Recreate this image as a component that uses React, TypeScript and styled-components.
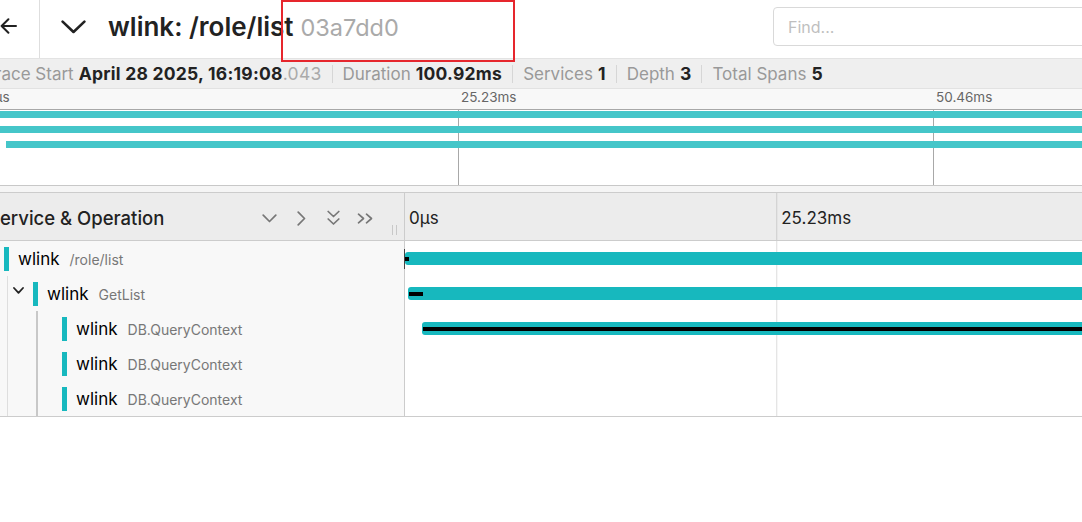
import React from 'react';
import styled, { createGlobalStyle } from 'styled-components';

const GlobalStyle = createGlobalStyle`
  *, *::before, *::after { box-sizing: border-box; }
  html, body { margin: 0; padding: 0; background: #fff; overflow: hidden; }
  body {
    font-family: Inter, "Noto Sans", "Liberation Sans", sans-serif;
    color: #222;
    -webkit-font-smoothing: antialiased;
  }
`;

const TEAL = '#17b8be';
const MINI_TEAL = '#45c6c9';
const TOTAL_MS = 100.92;
const pct = (ms: number) => `${(ms / TOTAL_MS) * 100}%`;

type Span = {
  service: string;
  op: string;
  start: number;
  dur: number;
  guides: boolean[];
  hasChildren?: boolean;
  critical?: [number, number];
};

const spans: Span[] = [
  { service: 'wlink', op: '/role/list', start: 0, dur: 100.92, guides: [], hasChildren: true, critical: [0, 0.27] },
  { service: 'wlink', op: 'GetList', start: 0.22, dur: 100.4, guides: [false], hasChildren: true, critical: [0.27, 1.22] },
  { service: 'wlink', op: 'DB.QueryContext', start: 1.17, dur: 67.9, guides: [false, true], critical: [1.22, 69.07] },
  { service: 'wlink', op: 'DB.QueryContext', start: 69.9, dur: 14.6, guides: [false, true] },
  { service: 'wlink', op: 'DB.QueryContext', start: 85.1, dur: 15.2, guides: [false, true] },
];

const ticks = ['0µs', '25.23ms', '50.46ms', '75.69ms'];

/* ---------- page ---------- */

const Page = styled.div`
  width: 1910px;
  margin-left: -16px;
`;

/* ---------- header ---------- */

const Header = styled.header`
  position: relative;
  display: flex;
  height: 59px;
  border-bottom: 1px solid #e3e3e3;
  background: #fff;
`;

const BackLink = styled.a`
  flex: 0 0 56px;
  display: flex;
  align-items: center;
  padding: 0 0 7px 16px;
  border-right: 1px solid #dedede;
  color: #222;
`;

const TitleArea = styled.div`
  flex: 1 1 auto;
  min-width: 0;
  display: flex;
  align-items: center;
  padding-bottom: 5px;
`;

const CollapseToggle = styled.button`
  display: flex;
  align-items: center;
  justify-content: center;
  width: 26px;
  height: 26px;
  margin-left: 20px;
  padding: 0;
  border: 0;
  background: none;
  color: #222;
`;

const Title = styled.h1`
  margin: 0 0 0 22px;
  font-size: 26px;
  font-weight: 600;
  color: #222;
  white-space: nowrap;
`;

const TraceId = styled.small`
  margin-left: 7px;
  font-size: 23.5px;
  font-weight: 400;
  color: #aaa;
`;

const Controls = styled.div`
  flex: 0 0 1121px;
  display: flex;
  align-items: center;
  padding-bottom: 5px;
`;

const SearchInput = styled.input`
  width: 330px;
  height: 39px;
  padding: 0 14px;
  border: 1px solid #d9d9d9;
  border-radius: 4px;
  font-family: inherit;
  font-size: 16px;
  color: #222;
  background: #fff;
  &::placeholder { color: #bfbfbf; }
`;

const Highlight = styled.div`
  position: absolute;
  left: 297px;
  top: 0;
  width: 234px;
  height: 62px;
  border: 2px solid #e6262d;
  pointer-events: none;
  z-index: 5;
`;

/* ---------- overview ---------- */

const Overview = styled.div`
  display: flex;
  align-items: center;
  height: 30px;
  padding-left: 1px;
  background: #efefef;
  border-bottom: 1px solid #e2e2e2;
  font-size: 17px;
  white-space: nowrap;
`;

const OverviewItem = styled.span`
  color: #999;
`;

const OverviewValue = styled.strong`
  margin-left: 5px;
  font-size: 17.5px;
  font-weight: 700;
  letter-spacing: 0.25px;
  color: #222;
`;

const Muted = styled.span`
  color: #aaa;
  font-weight: 400;
`;

const Divider = styled.span`
  width: 1px;
  height: 18px;
  margin: 0 10px;
  background: #d6d6d6;
`;

/* ---------- minimap ---------- */

const MinimapWrap = styled.div`
  padding-bottom: 6px;
  background: #f5f5f5;
`;

const Minimap = styled.div`
  width: 1900px;
  background: #fff;
`;

const MiniTicks = styled.div`
  display: grid;
  grid-template-columns: repeat(4, 1fr);
  height: 21px;
  background: #f8f8f8;
  border-bottom: 1px solid #a8a8a8;
`;

const MiniTick = styled.span`
  padding-left: 2px;
  font-size: 13.5px;
  line-height: 17px;
  color: #666;
`;

const MiniCanvas = styled.div`
  height: 76px;
  border-bottom: 1px solid #c8c8c8;
  background-image: linear-gradient(to left, #a8a8a8 1px, transparent 1px);
  background-size: 25% 100%;
`;

const MiniRow = styled.div`
  height: 15px;
  padding-top: 1px;
`;

const MiniBar = styled.div`
  height: 7px;
  background: ${MINI_TEAL};
`;

/* ---------- timeline view ---------- */

const TimelineView = styled.section`
  border-top: 1px solid #ccc;
  border-bottom: 1px solid #ccc;
`;

const HeaderRow = styled.div`
  display: grid;
  grid-template-columns: 421px 1fr;
  height: 48px;
  background: #ececec;
  border-bottom: 1px solid #ccc;
`;

const NameHeader = styled.div`
  display: flex;
  align-items: center;
  padding: 3px 7px 0 4px;
  border-right: 1px solid #ccc;
`;

const ColumnTitle = styled.h3`
  flex: 1 1 auto;
  margin: 0;
  font-size: 18.5px;
  font-weight: 500;
  color: #222;
  white-space: nowrap;
`;

const IconButton = styled.button`
  flex: 0 0 32px;
  display: flex;
  align-items: center;
  justify-content: center;
  height: 24px;
  padding: 0;
  border: 0;
  background: none;
  color: #777;
`;

const ResizeHandle = styled.span`
  align-self: flex-end;
  flex: 0 0 5px;
  height: 10px;
  margin: 0 0 5px 11px;
  border-left: 1px solid #c8c8c8;
  border-right: 1px solid #c8c8c8;
`;

const TickHeader = styled.div`
  display: grid;
  grid-template-columns: repeat(4, 1fr);
  background-image: linear-gradient(to left, #ccc 1px, transparent 1px);
  background-size: 25% 100%;
`;

const TickHeadLabel = styled.span`
  display: flex;
  align-items: center;
  padding: 3px 0 0 4px;
  font-size: 17px;
  color: #222;
`;

const Row = styled.div`
  display: grid;
  grid-template-columns: 421px 1fr;
  height: 35px;
`;

const NameCell = styled.div`
  display: flex;
  align-items: center;
  background: #f8f8f8;
  border-right: 1px solid #ccc;
  white-space: nowrap;
`;

const Guide = styled.span<{ $strong?: boolean }>`
  flex: 0 0 29px;
  align-self: stretch;
  display: flex;
  &::before {
    content: '';
    margin-left: 23px;
    width: ${(p) => (p.$strong ? 2 : 1)}px;
    background: ${(p) => (p.$strong ? '#c8c8c8' : '#dedede')};
  }
`;

const ToggleSlot = styled.span`
  flex: 0 0 20px;
  display: flex;
  align-items: center;
  padding-bottom: 7px;
  color: #222;
`;

const Indicator = styled.span`
  flex: 0 0 5px;
  height: 24px;
  margin-right: 9px;
  background: ${TEAL};
`;

const ServiceName = styled.span`
  font-size: 17px;
  color: #000;
`;

const OperationName = styled.span`
  margin-left: 10px;
  font-size: 14px;
  color: #777;
`;

const TimelineCell = styled.div`
  display: flex;
  align-items: center;
  background-image: linear-gradient(to left, #dcdcdc 1px, transparent 1px);
  background-size: 25% 100%;
`;

const Track = styled.div`
  position: relative;
  flex: 1 1 auto;
  height: 13px;
`;

const Bar = styled.div`
  position: absolute;
  top: 0;
  bottom: 0;
  border-radius: 3px;
  background: ${TEAL};
`;

const CriticalPath = styled.div`
  position: absolute;
  top: 4.5px;
  height: 4px;
  background: #000;
`;

const StartMark = styled.span`
  position: absolute;
  left: -1px;
  top: -3.5px;
  width: 1px;
  height: 20px;
  background: #444;
`;

/* ---------- icons ---------- */

const ArrowLeftIcon = () => (
  <svg width="17" height="16" viewBox="0 0 17 16" fill="none" stroke="currentColor" strokeWidth="2" strokeLinecap="round" strokeLinejoin="round">
    <path d="M16 8H1.6M8.4 1.3L1.6 8L8.4 14.7" />
  </svg>
);

const BigChevronDown = () => (
  <svg width="25" height="14" viewBox="0 0 25 14" fill="none" stroke="currentColor" strokeWidth="2.6" strokeLinecap="round" strokeLinejoin="round">
    <polyline points="1.6,1.6 12.5,12 23.4,1.6" />
  </svg>
);

const ChevronDownIcon = () => (
  <svg width="15" height="9" viewBox="0 0 15 9" fill="none" stroke="currentColor" strokeWidth="1.7" strokeLinecap="round" strokeLinejoin="round">
    <polyline points="1.2,1.2 7.5,7.5 13.8,1.2" />
  </svg>
);

const ChevronRightIcon = () => (
  <svg width="9" height="15" viewBox="0 0 9 15" fill="none" stroke="currentColor" strokeWidth="1.7" strokeLinecap="round" strokeLinejoin="round">
    <polyline points="1.2,1.2 7.5,7.5 1.2,13.8" />
  </svg>
);

const DoubleDownIcon = () => (
  <svg width="13" height="16" viewBox="0 0 13 16" fill="none" stroke="currentColor" strokeWidth="1.7" strokeLinecap="round" strokeLinejoin="round">
    <polyline points="1.2,1.5 6.5,6.5 11.8,1.5" />
    <polyline points="1.2,9 6.5,14 11.8,9" />
  </svg>
);

const DoubleRightIcon = () => (
  <svg width="17" height="11" viewBox="0 0 17 11" fill="none" stroke="currentColor" strokeWidth="1.7" strokeLinecap="round" strokeLinejoin="round">
    <polyline points="1.5,1.2 6.5,5.5 1.5,9.8" />
    <polyline points="9.5,1.2 14.5,5.5 9.5,9.8" />
  </svg>
);

const SmallChevron = () => (
  <svg width="11" height="7" viewBox="0 0 11 7" fill="none" stroke="currentColor" strokeWidth="1.8" strokeLinecap="round" strokeLinejoin="round">
    <polyline points="1,1 5.5,5.8 10,1" />
  </svg>
);

/* ---------- app ---------- */

export default function App() {
  return (
    <>
      <GlobalStyle />
      <Page>
        <Header>
          <BackLink href="#" aria-label="Back">
            <ArrowLeftIcon />
          </BackLink>
          <TitleArea>
            <CollapseToggle aria-label="Collapse details">
              <BigChevronDown />
            </CollapseToggle>
            <Title>
              wlink: /role/list<TraceId>03a7dd0</TraceId>
            </Title>
          </TitleArea>
          <Controls>
            <SearchInput placeholder="Find..." />
          </Controls>
          <Highlight />
        </Header>

        <Overview>
          <OverviewItem>
            Trace Start
            <OverviewValue>
              April 28 2025, 16:19:08<Muted>.043</Muted>
            </OverviewValue>
          </OverviewItem>
          <Divider />
          <OverviewItem>
            Duration<OverviewValue>100.92ms</OverviewValue>
          </OverviewItem>
          <Divider />
          <OverviewItem>
            Services<OverviewValue>1</OverviewValue>
          </OverviewItem>
          <Divider />
          <OverviewItem>
            Depth<OverviewValue>3</OverviewValue>
          </OverviewItem>
          <Divider />
          <OverviewItem>
            Total Spans<OverviewValue>5</OverviewValue>
          </OverviewItem>
        </Overview>

        <MinimapWrap>
          <Minimap>
            <MiniTicks>
              {ticks.map((t) => (
                <MiniTick key={t}>{t}</MiniTick>
              ))}
            </MiniTicks>
            <MiniCanvas>
              {spans.map((s, i) => (
                <MiniRow key={i}>
                  <MiniBar style={{ marginLeft: pct(s.start), width: pct(s.dur) }} />
                </MiniRow>
              ))}
            </MiniCanvas>
          </Minimap>
        </MinimapWrap>

        <TimelineView>
          <HeaderRow>
            <NameHeader>
              <ColumnTitle>Service &amp; Operation</ColumnTitle>
              <IconButton aria-label="Expand +1"><ChevronDownIcon /></IconButton>
              <IconButton aria-label="Collapse +1"><ChevronRightIcon /></IconButton>
              <IconButton aria-label="Expand all"><DoubleDownIcon /></IconButton>
              <IconButton aria-label="Collapse all"><DoubleRightIcon /></IconButton>
              <ResizeHandle />
            </NameHeader>
            <TickHeader>
              {ticks.map((t) => (
                <TickHeadLabel key={t}>{t}</TickHeadLabel>
              ))}
            </TickHeader>
          </HeaderRow>

          {spans.map((s, i) => (
            <Row key={i}>
              <NameCell>
                {s.guides.map((strong, g) => (
                  <Guide key={g} $strong={strong} />
                ))}
                <ToggleSlot>{s.hasChildren && <SmallChevron />}</ToggleSlot>
                <Indicator />
                <span>
                  <ServiceName>{s.service}</ServiceName>
                  <OperationName>{s.op}</OperationName>
                </span>
              </NameCell>
              <TimelineCell>
                <Track>
                  <Bar style={{ left: pct(s.start), width: pct(s.dur) }} />
                  {s.critical && (
                    <CriticalPath
                      style={{ left: pct(s.critical[0]), width: pct(s.critical[1] - s.critical[0]) }}
                    />
                  )}
                  {i === 0 && <StartMark />}
                </Track>
              </TimelineCell>
            </Row>
          ))}
        </TimelineView>
      </Page>
    </>
  );
}
